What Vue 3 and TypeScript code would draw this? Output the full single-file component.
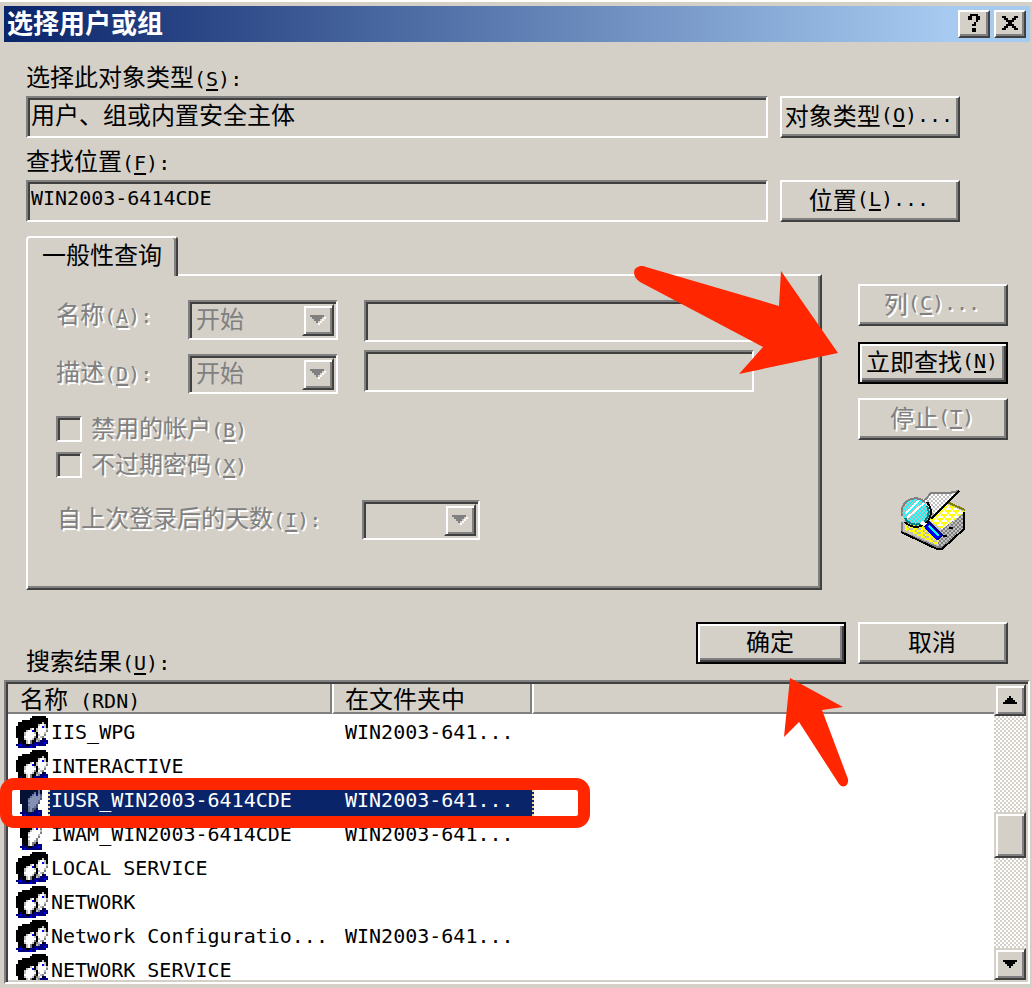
<script setup lang="ts">
import { computed, ref } from 'vue'

interface Principal {
  name: string
  folder: string
  kind: 'group' | 'user'
}

interface Pixel {
  x: number
  y: number
  w: number
  fill: string
}

type Palette = Record<string, string>

const normal: Palette = {
  K: '#000000',
  W: '#ffffff',
  G: '#808080',
  S: '#c0c0c0',
  N: '#000080',
  B: '#0000ff',
}

const highlighted: Palette = {
  K: '#051235',
  W: '#8491b4',
  G: '#455275',
  S: '#657295',
  N: '#000080',
  B: '#0512b4',
}

function toPixels(rows: string[], palette: Palette): Pixel[] {
  const out: Pixel[] = []
  rows.forEach((row, y) => {
    let x = 0
    while (x < row.length) {
      const key = row[x]
      let w = 1
      while (row[x + w] === key) w++
      if (palette[key]) out.push({ x, y, w, fill: palette[key] })
      x += w
    }
  })
  return out
}

const sprites = {
  group: [
    '........KKKKKKK.',
    '.......KKKKKKKKK',
    '...KKKKKKKKKKKKK',
    '.KKKKKKKKKKKKSKK',
    '.KKKKKKKKKKSWWSK',
    'KKKKKKKKKKKWWBSK',
    'KKKKKKKSWKSWWWWS',
    'KKKKKSWWBKSWWWWG',
    'KKKKSWWWWSKWWWS.',
    'KKKKSWWWWWKSWWG.',
    'KKKKWWWWWGKWSG..',
    '.KKKSWWWSKGSWKN.',
    '.KKKKSWGKKSGNNNN',
    '.KNKKSWGKNNNNNBN',
    'NNBNNKKNNNBNNNN.',
    '.NNNNNNBNN......',
  ],
  user: [
    '.....KKKKKKK....',
    '....KKKKKKKKK...',
    '..KKKKKKKKKKK...',
    '..KKKKKKKKKSK...',
    '..KKKKKKKSKSK...',
    '..KKKKKKSWBWG...',
    '..KKKKKSWWWWS...',
    '..KKKKSWWWWWG...',
    '..KKKKWWWWWS....',
    '..KKKKSWWWWG....',
    '...KKKWWWWG.....',
    '...KKKSWWSG.....',
    '...KKKSWGGK.....',
    '...NKKSWGKNNN...',
    '..NNNNKKNNNBN...',
    '...NBNNNNNNNN...',
  ],
}

const principals: Principal[] = [
  { name: 'IIS_WPG', folder: 'WIN2003-641...', kind: 'group' },
  { name: 'INTERACTIVE', folder: '', kind: 'group' },
  { name: 'IUSR_WIN2003-6414CDE', folder: 'WIN2003-641...', kind: 'user' },
  { name: 'IWAM_WIN2003-6414CDE', folder: 'WIN2003-641...', kind: 'user' },
  { name: 'LOCAL SERVICE', folder: '', kind: 'group' },
  { name: 'NETWORK', folder: '', kind: 'group' },
  { name: 'Network Configuratio...', folder: 'WIN2003-641...', kind: 'group' },
  { name: 'NETWORK SERVICE', folder: '', kind: 'group' },
]

const selected = ref(2)
const rows = computed(() =>
  principals.map((p, i) => ({
    ...p,
    active: i === selected.value,
    sprite: toPixels(sprites[p.kind], i === selected.value ? highlighted : normal),
  })),
)
</script>

<template>
  <main class="window">
    <header class="titlebar">
      <h1>选择用户或组</h1>
      <button type="button" class="caption" aria-label="帮助">
        <svg width="12" height="18" viewBox="0 0 6 9" shape-rendering="crispEdges">
          <path d="M1 0h4v1h1v2h-1v1h-1v2h-2v-1h1v-1h1v-3h-2v2h-2v-2h1zM2 7h2v2h-2z" />
        </svg>
      </button>
      <button type="button" class="caption" aria-label="关闭">
        <svg width="16" height="14" viewBox="0 0 8 7" shape-rendering="crispEdges">
          <path d="M0 0h2v1h1v1h2v-1h1v-1h2v1h-1v1h-1v1h-1v1h1v1h1v1h1v1h-2v-1h-1v-1h-2v1h-1v1h-2v-1h1v-1h1v-1h1v-1h-1v-1h-1v-1h-1z" />
        </svg>
      </button>
    </header>

    <section class="fields">
      <label for="otype">选择此对象类型<span class="lat">(<u>S</u>):</span></label>
      <input id="otype" class="well" type="text" readonly value="用户、组或内置安全主体" />
      <button type="button" class="btn">对象类型<span class="lat">(<u>O</u>)...</span></button>
      <label for="place">查找位置<span class="lat">(<u>F</u>):</span></label>
      <input id="place" class="well lat" type="text" readonly value="WIN2003-6414CDE" />
      <button type="button" class="btn">位置<span class="lat">(<u>L</u>)...</span></button>
    </section>

    <section class="middle">
      <div class="tabs">
        <button type="button" class="tab">一般性查询</button>
        <div class="panel">
          <div class="query">
            <div class="names">
              <label class="off" for="name">名称<span class="lat">(<u>A</u>):</span></label>
              <label class="off" for="desc">描述<span class="lat">(<u>D</u>):</span></label>
            </div>
            <div class="modes">
              <span class="combo">
                <select class="well" disabled aria-label="名称条件"><option>开始</option></select>
                <span class="drop"><svg width="16" height="10" viewBox="0 0 8 5" shape-rendering="crispEdges"><path fill="#fff" d="M7 1h1v1h-1v1h-1v1h-1v1h-1v-1h1v-1h1v-1h1z" /><path fill="#808080" d="M0 0h7v1h-1v1h-1v1h-1v1h-1v-1h-1v-1h-1v-1h-1z" /></svg></span>
              </span>
              <span class="combo">
                <select class="well" disabled aria-label="描述条件"><option>开始</option></select>
                <span class="drop"><svg width="16" height="10" viewBox="0 0 8 5" shape-rendering="crispEdges"><path fill="#fff" d="M7 1h1v1h-1v1h-1v1h-1v1h-1v-1h1v-1h1v-1h1z" /><path fill="#808080" d="M0 0h7v1h-1v1h-1v1h-1v1h-1v-1h-1v-1h-1v-1h-1z" /></svg></span>
              </span>
            </div>
            <div class="values">
              <input id="name" class="well" type="text" disabled />
              <input id="desc" class="well" type="text" disabled />
            </div>
          </div>
          <div class="checks">
            <label class="off check"><input type="checkbox" disabled /><span>禁用的帐户<span class="lat">(<u>B</u>)</span></span></label>
            <label class="off check"><input type="checkbox" disabled /><span>不过期密码<span class="lat">(<u>X</u>)</span></span></label>
          </div>
          <div class="days">
            <label class="off" for="days">自上次登录后的天数<span class="lat">(<u>I</u>):</span></label>
            <span class="combo small">
              <select id="days" class="well" disabled><option></option></select>
              <span class="drop"><svg width="16" height="10" viewBox="0 0 8 5" shape-rendering="crispEdges"><path fill="#fff" d="M7 1h1v1h-1v1h-1v1h-1v1h-1v-1h1v-1h1v-1h1z" /><path fill="#808080" d="M0 0h7v1h-1v1h-1v1h-1v1h-1v-1h-1v-1h-1v-1h-1z" /></svg></span>
            </span>
          </div>
        </div>
      </div>
      <div class="side">
        <button type="button" class="btn" disabled>列<span class="lat">(<u>C</u>)...</span></button>
        <button type="button" class="btn primary">立即查找<span class="lat">(<u>N</u>)</span></button>
        <button type="button" class="btn" disabled>停止<span class="lat">(<u>T</u>)</span></button>
        <svg class="finder" width="64" height="60" viewBox="0 0 32 30" shape-rendering="crispEdges">
          <defs>
            <pattern id="yel" width="4" height="4" patternUnits="userSpaceOnUse"><rect width="4" height="4" fill="#fff" /><path fill="#ff0" d="M0 0h3v1h-3zM2 2h2v1h-2zM0 2h1v1h-1zM1 1h1v1h-1zM3 3h1v1h-1z" /></pattern>
            <pattern id="band" width="4" height="2" patternUnits="userSpaceOnUse"><rect width="4" height="2" fill="#c0c0c0" /><path fill="#ff0" d="M0 0h3v1h-3zM2 1h2v1h-2z" /></pattern>
            <pattern id="gry" width="2" height="2" patternUnits="userSpaceOnUse"><rect width="2" height="2" fill="#c0c0c0" /><path fill="#808080" d="M0 0h1v1h-1zM1 1h1v1h-1z" /></pattern>
            <pattern id="pap" width="2" height="2" patternUnits="userSpaceOnUse"><rect width="2" height="2" fill="#fff" /><path fill="#c0c0c0" d="M0 0h1v1h-1zM1 1h1v1h-1z" /></pattern>
            <pattern id="cyn" width="2" height="2" patternUnits="userSpaceOnUse"><rect width="2" height="2" fill="#c0c0c0" /><path fill="#0ff" d="M0 0h1v1h-1zM1 1h1v1h-1z" /></pattern>
          </defs>
          <path fill="#c0c0c0" d="M0 16L23 6L32 10L20 29H18L0 21z" />
          <path fill="url(#band)" d="M2 17L12 18L19 25V28L2 20z" />
          <path fill="url(#yel)" d="M23 7L32 11L21 20L14 15z" />
          <path fill="url(#gry)" d="M32 11V20L21 29H18L20 20z" />
          <path fill="none" stroke="#808000" d="M23 6L32 10" />
          <path fill="none" stroke="#808080" d="M0.5 16V21L18 28.500H20" />
          <path fill="none" stroke="#000" d="M0 21L18 29.500H20.500L31.500 19.500V11M24 19H26M21 23H23" />
          <path fill="#a8a8a8" d="M28 1L14 15L13 11z" />
          <path fill="url(#pap)" d="M15 1H28L17 12L14 11L12 5z" />
          <path fill="none" stroke="#808080" d="M12 5L15 1.500H24L29 0.500" />
          <path fill="none" stroke="#000" d="M29 0.500L15 14.500" />
          <circle cx="7" cy="10.500" r="6.500" fill="url(#cyn)" />
          <path stroke="#fff" stroke-width="1" d="M2 12L9 5M3 14L12 6" />
          <path fill="none" stroke="#808080" d="M0.500 13A7 7 0 0 1 12 6" />
          <path fill="none" stroke="#008080" stroke-width="1" d="M2 14A6 6 0 0 0 13 8" />
          <path fill="none" stroke="#000" d="M2 16A7 7 0 0 0 13 6" />
          <path stroke="#fff" stroke-width="2" d="M10 16L13 18" />
          <path stroke="#000080" stroke-width="4" d="M13 17L20 24" />
          <path stroke="#00f" stroke-width="3" d="M13 18L19 24" />
          <path stroke="#0ff" stroke-width="1" d="M14 18L19 23" />
        </svg>
      </div>
    </section>

    <section class="actions">
      <h2>搜索结果<span class="lat">(<u>U</u>):</span></h2>
      <button type="button" class="btn primary">确定</button>
      <button type="button" class="btn">取消</button>
    </section>

    <section class="list">
      <div class="rows">
        <table>
          <colgroup><col class="c1" /><col class="c2" /><col /></colgroup>
          <thead>
            <tr>
              <th>名称<span class="lat"> (RDN)</span></th>
              <th>在文件夹中</th>
              <th></th>
            </tr>
          </thead>
          <tbody class="lat">
            <tr v-for="(row, i) in rows" :key="row.name" :class="{ active: row.active }" @click="selected = i">
              <td>
                <div class="item">
                  <svg class="face" width="32" height="32" viewBox="0 0 16 16" shape-rendering="crispEdges">
                    <rect v-for="(p, n) in row.sprite" :key="n" :x="p.x" :y="p.y" :width="p.w" height="1" :fill="p.fill" />
                  </svg>
                  <span class="text">{{ row.name }}</span>
                </div>
              </td>
              <td><div class="text folder">{{ row.folder }}</div></td>
              <td></td>
            </tr>
          </tbody>
        </table>
      </div>
      <div class="scroll">
        <button type="button" aria-label="向上滚动"><svg width="14" height="8" viewBox="0 0 7 4" shape-rendering="crispEdges"><path d="M3 0h1v1h1v1h1v1h1v1h-7v-1h1v-1h1v-1h1z" /></svg></button>
        <div class="gap above"></div>
        <div class="thumb"></div>
        <div class="gap below"></div>
        <button type="button" aria-label="向下滚动"><svg width="14" height="8" viewBox="0 0 7 4" shape-rendering="crispEdges"><path d="M0 0h7v1h-1v1h-1v1h-1v1h-1v-1h-1v-1h-1v-1h-1z" /></svg></button>
      </div>
    </section>

    <div class="frame"></div>
    <svg class="arrow find" width="206" height="112" viewBox="0 0 206 112">
      <path d="M14 1L147 40L149 5L206 87L107 108L131 81L8 16C2 12 1 6 3 3C6 0 10 -1 14 1z" />
    </svg>
    <svg class="arrow confirm" width="66" height="112" viewBox="0 0 66 112">
      <path d="M7 1L60 30L39 33L65 102C66 109 60 112 56 107L16 45L1 60z" />
    </svg>
  </main>
</template>

<style>
body {
  margin: 0;
  background: #d4d0c8;
}
</style>

<style scoped>
.window {
  position: relative;
  box-sizing: border-box;
  display: flex;
  flex-direction: column;
  height: 100vh;
  min-height: 900px;
  padding: 4px 2px 4px 4px;
  border-top: 2px solid #fff;
  overflow: hidden;
  background: #d4d0c8;
  color: #000;
  font: 24px/28px "Noto Sans CJK SC", sans-serif;
}
.window * {
  box-sizing: border-box;
}
button,
input,
select {
  margin: 0;
  padding: 0;
  border-radius: 0;
  font: inherit;
  color: inherit;
}
.lat {
  font-family: "DejaVu Sans Mono", monospace;
  font-size: 20px;
}
span.lat {
  line-height: 20px;
}
u {
  text-underline-offset: 3px;
  text-decoration-thickness: 2px;
}
.titlebar {
  display: flex;
  flex: none;
  align-items: center;
  gap: 4px;
  height: 36px;
  padding: 0 4px 0 3px;
  background: linear-gradient(90deg, #0a246a, #a6caf0 92%);
}
h1 {
  flex: 1;
  margin: 0;
  padding-bottom: 4px;
  color: #fff;
  font-size: 26px;
  font-weight: 700;
  line-height: 32px;
}
.caption,
.btn {
  display: flex;
  align-items: center;
  justify-content: center;
  border: 2px solid;
  border-color: #fff #404040 #404040 #fff;
  background: #d4d0c8;
  box-shadow: inset -2px -2px 0 #808080;
}
.caption {
  width: 32px;
  height: 28px;
  padding: 0 0 2px;
}
.fields {
  display: grid;
  grid-template-columns: 1fr 180px;
  column-gap: 12px;
  padding: 18px 70px 14px 22px;
}
.fields label {
  grid-column: 1 / 3;
  height: 36px;
  line-height: 32px;
}
.fields button + label {
  margin-top: 6px;
}
.well {
  width: 100%;
  min-width: 0;
  height: 42px;
  border: 2px solid;
  border-color: #808080 #fff #fff #808080;
  background: #d4d0c8;
  box-shadow: inset 2px 2px 0 #404040;
  outline: none;
}
.fields .well {
  padding: 0 3px 8px;
}
.fields .well.lat {
  padding-bottom: 6px;
}
.btn {
  height: 42px;
  padding: 0 2px 5px 0;
  white-space: nowrap;
}
.btn.primary {
  border-color: #000;
  box-shadow: inset 2px 2px 0 #fff, inset -2px -2px 0 #404040, inset -4px -4px 0 #808080;
}
.off,
.btn:disabled {
  color: #808080;
  text-shadow: 2px 2px 0 #fff;
}
.middle {
  display: flex;
  gap: 36px;
  padding: 0 22px 32px;
}
.tabs {
  display: flex;
  flex: 1;
  flex-direction: column;
  align-items: flex-start;
}
.tab {
  z-index: 1;
  width: 152px;
  height: 40px;
  margin-bottom: -2px;
  padding-bottom: 6px;
  border: 2px solid;
  border-color: #fff #404040 transparent #fff;
  border-bottom: 0;
  border-radius: 4px 4px 0 0;
  background: #d4d0c8;
  box-shadow: inset -2px 0 0 #808080;
}
.panel {
  width: 100%;
  padding: 24px 66px 48px 28px;
  border: 2px solid;
  border-color: #fff #404040 #404040 #fff;
  box-shadow: inset -2px -2px 0 #808080;
}
.query {
  display: flex;
}
.names {
  display: flex;
  flex-direction: column;
  gap: 30px;
  width: 132px;
}
.names label {
  height: 28px;
  line-height: 26px;
}
.modes {
  display: flex;
  flex-direction: column;
  gap: 14px;
  width: 150px;
  margin-right: 26px;
}
.values {
  display: flex;
  flex: 1;
  flex-direction: column;
  gap: 8px;
}
.combo {
  display: grid;
  height: 40px;
}
.combo > * {
  grid-area: 1 / 1;
}
.combo .well {
  height: 40px;
  padding: 0 0 4px 6px;
  appearance: none;
  box-shadow: inset 2px 2px 0 #404040, inset -2px -2px 0 #d4d0c8;
  color: #808080;
  opacity: 1;
}
.drop {
  z-index: 1;
  place-self: center end;
  margin-right: 4px;
  pointer-events: none;
}
.checks {
  display: flex;
  flex-direction: column;
  gap: 10px;
  padding: 22px 0;
}
.check {
  display: flex;
  height: 26px;
  line-height: 22px;
}
.check input {
  width: 26px;
  height: 26px;
  margin-right: 9px;
  appearance: none;
  border: 2px solid;
  border-color: #808080 #fff #fff #808080;
  box-shadow: inset 2px 2px 0 #404040;
}
.days {
  display: flex;
}
.days label {
  width: 306px;
  padding-left: 1px;
  line-height: 34px;
}
.combo.small {
  width: 118px;
}
.side {
  display: flex;
  flex-direction: column;
  width: 150px;
  padding-top: 48px;
}
.side .primary {
  margin: 16px 0 14px;
}
.finder {
  align-self: center;
  margin-top: 50px;
}
.actions {
  display: flex;
  gap: 12px;
  height: 58px;
  padding: 0 22px;
}
h2 {
  flex: 1;
  align-self: flex-end;
  height: 36px;
  margin: 0;
  font-size: 24px;
  font-weight: 400;
  line-height: 32px;
}
.actions .btn {
  width: 150px;
}
.list {
  display: flex;
  flex: 1;
  min-height: 0;
  padding: 2px;
  border: 2px solid;
  border-color: #808080 #fff #fff #808080;
  background: #fff;
  box-shadow: inset 2px 2px 0 #404040, inset -2px -2px 0 #d4d0c8;
}
.rows {
  flex: 1;
  overflow: hidden;
}
table {
  width: 100%;
  border-spacing: 0;
  table-layout: fixed;
}
.c1 {
  width: 324px;
}
.c2 {
  width: 200px;
}
th {
  height: 30px;
  padding: 0 12px;
  border-right: 2px solid #808080;
  border-bottom: 2px solid #808080;
  background: #d4d0c8;
  font-weight: 400;
  line-height: 28px;
  text-align: left;
  white-space: pre;
}
th + th {
  padding-left: 11px;
  border-left: 2px solid #fff;
}
th:last-child {
  border-right: 0;
}
td {
  height: 34px;
  padding: 0;
}
.item {
  display: flex;
  padding-left: 8px;
}
.face {
  flex: none;
  margin-top: 2px;
}
.text {
  flex: 1;
  height: 34px;
  padding-left: 3px;
  line-height: 36px;
  white-space: nowrap;
}
.folder {
  padding-left: 13px;
}
.active .text {
  background: #0a246a;
  color: #fff;
}
.active .item .text {
  padding-left: 1px;
  border-left: 2px dotted #f5db95;
}
.active .folder {
  margin-right: -2px;
  border-right: 2px dotted #f5db95;
}
.scroll {
  display: flex;
  flex: none;
  flex-direction: column;
  width: 32px;
}
.scroll button,
.drop,
.thumb {
  display: flex;
  flex: none;
  align-items: center;
  justify-content: center;
  width: 32px;
  height: 32px;
  border: 2px solid;
  border-color: #d4d0c8 #404040 #404040 #d4d0c8;
  background: #d4d0c8;
  box-shadow: inset 2px 2px 0 #fff, inset -2px -2px 0 #808080;
}
.scroll .thumb {
  height: 46px;
}
.gap {
  background: repeating-conic-gradient(#fff 0 25%, #d4d0c8 0 50%) 0 0 / 4px 4px;
}
.above {
  flex: 96;
}
.below {
  flex: 90;
}
.frame {
  position: absolute;
  top: 776px;
  left: 0;
  width: 590px;
  height: 50px;
  border: 12px solid #ff2600;
  border-radius: 14px;
}
.arrow {
  position: absolute;
  fill: #ff2600;
  pointer-events: none;
}
.find {
  top: 264px;
  left: 632px;
}
.confirm {
  top: 675px;
  left: 783px;
}
</style>
